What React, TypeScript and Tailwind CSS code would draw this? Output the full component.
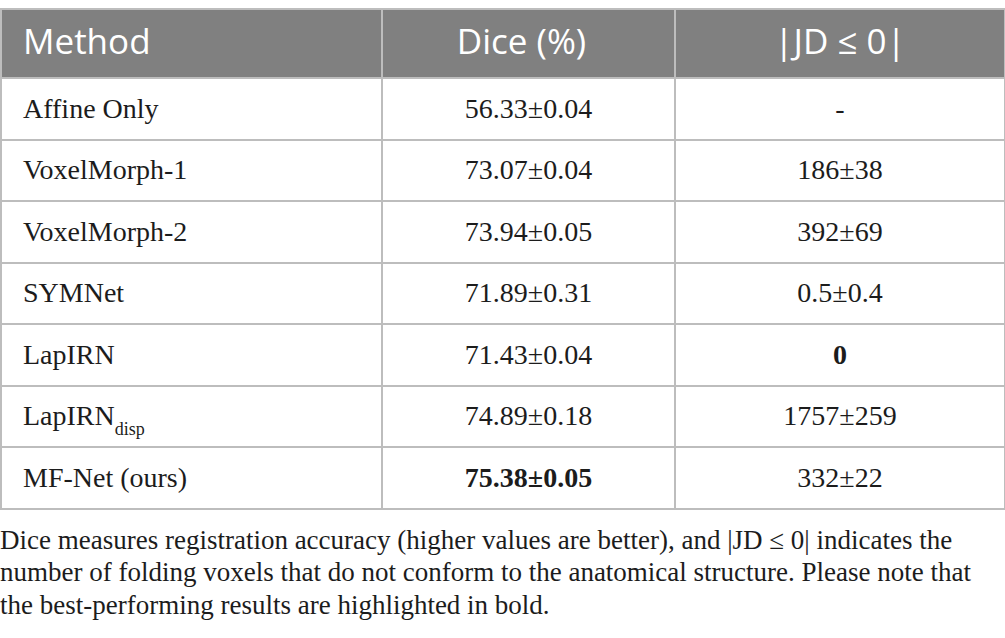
import React from "react";

const rows: { m: React.ReactNode; d: React.ReactNode; j: React.ReactNode }[] = [
  { m: "Affine Only", d: "56.33±0.04", j: "-" },
  { m: "VoxelMorph-1", d: "73.07±0.04", j: "186±38" },
  { m: "VoxelMorph-2", d: "73.94±0.05", j: "392±69" },
  { m: "SYMNet", d: "71.89±0.31", j: "0.5±0.4" },
  { m: "LapIRN", d: "71.43±0.04", j: <b>0</b> },
  {
    m: (
      <>
        LapIRN<sub className="text-[18px] align-[-5px]">disp</sub>
      </>
    ),
    d: "74.89±0.18",
    j: "1757±259",
  },
  { m: "MF-Net (ours)", d: <b>75.38±0.05</b>, j: "332±22" },
];

export default function App() {
  return (
    <div className="w-[1005px] h-[638px] bg-white pt-[8px]">
      <table className="w-[1004px] border-collapse table-fixed">
        <colgroup>
          <col className="w-[381px]" />
          <col className="w-[293px]" />
          <col className="w-[330px]" />
        </colgroup>
        <thead>
          <tr className="h-[69px] bg-[#808080] text-white text-[35px] font-['Open_Sans',sans-serif]">
            <th className="border-2 border-[#bdbdbd] font-normal text-left pl-[21px] pb-[4px]">Method</th>
            <th className="border-2 border-[#bdbdbd] font-normal text-center pr-[14px] pb-[4px]">Dice (%)</th>
            <th className="border-2 border-[#bdbdbd] font-normal text-center pb-[4px]">|JD ≤ 0|</th>
          </tr>
        </thead>
        <tbody className="text-[28px] text-[#1c1c1c] font-['Liberation_Serif',serif]">
          {rows.map((r, i) => (
            <tr key={i} className="h-[61.5px]">
              <td className="border-2 border-[#bdbdbd] pl-[21px]">{r.m}</td>
              <td className="border-2 border-[#bdbdbd] text-center">{r.d}</td>
              <td className="border-2 border-[#bdbdbd] text-center">{r.j}</td>
            </tr>
          ))}
        </tbody>
      </table>
      <p className="mt-[14px] text-[27px] leading-[32.5px] text-[#1c1c1c] font-['Liberation_Serif',serif]">
        Dice measures registration accuracy (higher values are better), and |JD ≤ 0| indicates the number of folding voxels that do not conform to the anatomical structure. Please note that the best-performing results are highlighted in bold.
      </p>
    </div>
  );
}
